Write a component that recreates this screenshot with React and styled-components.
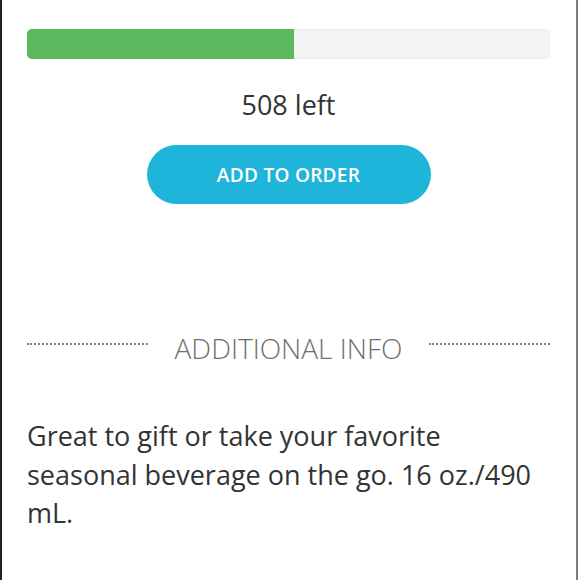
import React from 'react'
import styled, { createGlobalStyle } from 'styled-components'

const GlobalStyle = createGlobalStyle`
  html, body {
    margin: 0;
    padding: 0;
    background: #fff;
  }
  body {
    font-family: "Open Sans", "Noto Sans", sans-serif;
  }
`

const Page = styled.div`
  box-sizing: border-box;
  width: 578px;
  min-height: 580px;
  border-left: 2px solid #222;
  border-right: 2px solid #7a7a7a;
  padding: 29px 26px 0 25px;
`

const Track = styled.div`
  height: 30px;
  border-radius: 5px;
  background: #f4f4f4;
  box-shadow: inset 0 0 0 1px #ececec;
  overflow: hidden;
`

const Fill = styled.div`
  height: 100%;
  background: #5cb85c;
`

const Remaining = styled.div`
  margin-top: 28px;
  text-align: center;
  font-size: 27px;
  line-height: 36px;
  color: #333;
`

const AddButton = styled.button`
  display: block;
  margin: 22px auto 0;
  width: 284px;
  height: 59px;
  border: none;
  border-radius: 30px;
  background: #1fb5da;
  color: #fff;
  font-family: "Open Sans", sans-serif;
  font-size: 19px;
  font-weight: 600;
  letter-spacing: 0.3px;
`

const Divider = styled.div`
  margin-top: 126px;
  display: flex;
  align-items: center;
  gap: 27px;
`

const Dots = styled.div`
  flex: 1;
  border-top: 2px dotted #7f7f7f;
  margin-top: -8px;
`

const DividerLabel = styled.div`
  font-size: 28px;
  font-weight: 300;
  color: #6f6f6f;
  line-height: 36px;
`

const Description = styled.p`
  margin: 51px 0 0;
  font-size: 27px;
  line-height: 38.5px;
  color: #333;
`

export default function App() {
  const sold = 51
  return (
    <>
      <GlobalStyle />
      <Page>
        <Track>
          <Fill style={{ width: `${sold}%` }} />
        </Track>
        <Remaining>508 left</Remaining>
        <AddButton>ADD TO ORDER</AddButton>
        <Divider>
          <Dots />
          <DividerLabel>ADDITIONAL INFO</DividerLabel>
          <Dots />
        </Divider>
        <Description>
          Great to gift or take your favorite seasonal beverage on the go. 16 oz./490 mL.
        </Description>
      </Page>
    </>
  )
}
